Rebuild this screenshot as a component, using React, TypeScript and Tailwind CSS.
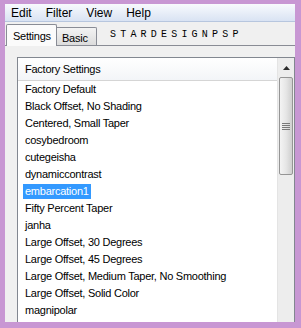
const FONT = { fontFamily: '"Liberation Sans", Arial, sans-serif' };

const presets = [
  'Factory Default',
  'Black Offset, No Shading',
  'Centered, Small Taper',
  'cosybedroom',
  'cutegeisha',
  'dynamiccontrast',
  'embarcation1',
  'Fifty Percent Taper',
  'janha',
  'Large Offset, 30 Degrees',
  'Large Offset, 45 Degrees',
  'Large Offset, Medium Taper, No Smoothing',
  'Large Offset, Solid Color',
  'magnipolar',
];

const menus = ['Edit', 'Filter', 'View', 'Help'];

function ScrollBar() {
  return (
    <div className="w-[17px] flex flex-col bg-[#ededed] border-l border-[#e4e4e4]">
      {/* up button */}
      <div className="h-[19px] shrink-0 flex items-center justify-center">
        <svg width="7" height="4" viewBox="0 0 7 4">
          <path d="M3.5 0 L7 4 L0 4 Z" fill="#2b2b2b" />
        </svg>
      </div>
      {/* thumb */}
      <div className="h-[98px] shrink-0 mx-[1px] rounded-[2px] border border-[#959595] bg-gradient-to-r from-[#f4f4f4] via-[#e6e6e6] to-[#cfcfcf] flex flex-col items-center justify-center gap-[1px]">
        <div className="w-[8px] h-px bg-[#7a7a7a]" />
        <div className="w-[8px] h-px bg-[#7a7a7a]" />
        <div className="w-[8px] h-px bg-[#7a7a7a]" />
        <div className="w-[8px] h-px bg-[#7a7a7a]" />
      </div>
      <div className="flex-1" />
    </div>
  );
}

export default function App() {
  return (
    <div className="w-[301px] h-[328px] bg-[#c897d3] pt-[4px] pl-[5px] pr-[6px] pb-[6px] flex" style={FONT}>
      <div className="flex-1 flex flex-col bg-[#f0f0f0] overflow-hidden">
        {/* menu bar */}
        <div className="h-[18px] shrink-0 flex items-center gap-[14px] pl-[6px] text-[12px] text-black bg-gradient-to-b from-[#f8fafd] to-[#d9e3f3] border-b border-[#b7c6de]">
          {menus.map((m) => (
            <span key={m} className="leading-none">
              {m}
            </span>
          ))}
        </div>

        {/* tab strip */}
        <div className="h-[24px] shrink-0 flex items-end border-b border-[#898c95] text-[11px] tracking-[-0.25px] text-black">
          <div className="relative z-10 -mb-px ml-[1px] w-[51px] h-[22px] bg-[#fbfbfb] border border-b-0 border-[#898c95] rounded-t-[2px] pl-[6px] pt-[3px]">
            Settings
          </div>
          <div className="w-[40px] h-[18px] bg-gradient-to-b from-[#f3f3f3] to-[#dcdcdc] border border-l-0 border-b-0 border-[#898c95] rounded-tr-[2px] pl-[5px] pt-[2px]">
            Basic
          </div>
          <div
            className="self-center mt-[2px] ml-[13px] text-[10px] leading-none tracking-[4.2px] text-black"
            style={{ fontFamily: '"Liberation Mono", monospace' }}
          >
            STARDESIGNPSP
          </div>
        </div>

        {/* panel */}
        <div className="flex-1 flex pt-[11px] pl-[12px] min-h-0">
          <div className="flex-1 flex border-t border-l border-r border-[#828790] bg-white min-h-0 overflow-hidden">
            <div className="flex-1 flex flex-col text-[11px] tracking-[-0.25px] text-black">
              <div className="h-[23px] shrink-0 flex items-center pl-[7px] border-b border-[#d5d5d5] bg-gradient-to-b from-[#ffffff] to-[#f3f5f8]">
                Factory Settings
              </div>
              {presets.map((p) => (
                <div key={p} className="h-[17px] flex items-center pl-[5px] shrink-0 whitespace-nowrap">
                  <span
                    className={
                      p === 'embarcation1'
                        ? 'px-[2px] leading-[15px] bg-[#3399ff] text-white'
                        : 'px-[2px] leading-[15px]'
                    }
                  >
                    {p}
                  </span>
                </div>
              ))}
            </div>
            <ScrollBar />
          </div>
        </div>
      </div>
    </div>
  );
}
